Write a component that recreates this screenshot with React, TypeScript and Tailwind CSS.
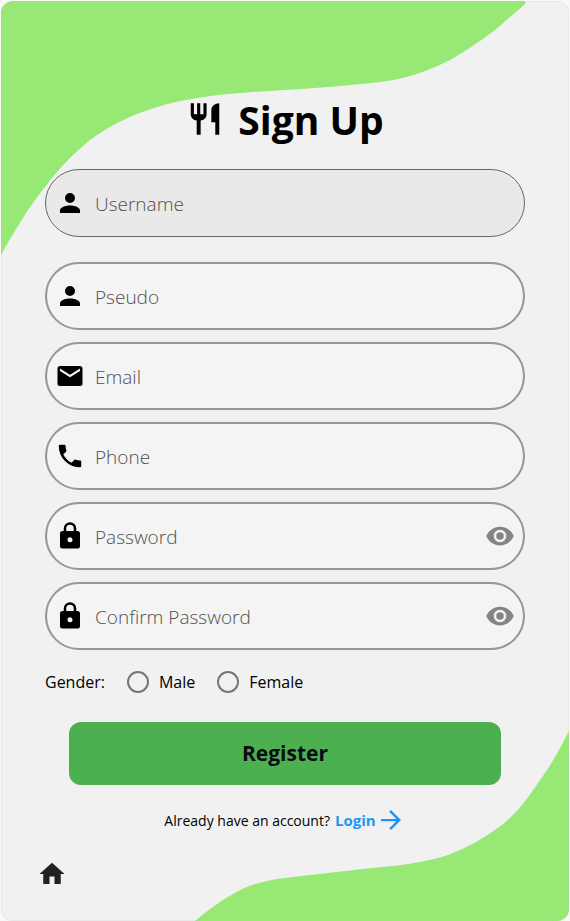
import React from "react";

const paths = {
  silverware:
    "M11,9H9V2H7V9H5V2H3V9C3,11.12 4.66,12.84 6.75,12.97V22H9.25V12.97C11.34,12.84 13,11.12 13,9V2H11V9M16,6V14H18.5V22H21V2C18.24,2 16,4.24 16,6Z",
  person:
    "M12,4A4,4 0 0,1 16,8A4,4 0 0,1 12,12A4,4 0 0,1 8,8A4,4 0 0,1 12,4M12,14C16.42,14 20,15.79 20,18V20H4V18C4,15.79 7.58,14 12,14Z",
  email:
    "M20,8L12,13L4,8V6L12,11L20,6M20,4H4C2.89,4 2,4.89 2,6V18A2,2 0 0,0 4,20H20A2,2 0 0,0 22,18V6C22,4.89 21.1,4 20,4Z",
  phone:
    "M6.62,10.79C8.06,13.62 10.38,15.94 13.21,17.38L15.41,15.18C15.69,14.9 16.08,14.82 16.43,14.93C17.55,15.3 18.75,15.5 20,15.5A1,1 0 0,1 21,16.5V20A1,1 0 0,1 20,21A17,17 0 0,1 3,4A1,1 0 0,1 4,3H7.5A1,1 0 0,1 8.5,4C8.5,5.25 8.7,6.45 9.07,7.57C9.18,7.92 9.1,8.31 8.82,8.59L6.62,10.79Z",
  lock:
    "M12,17A2,2 0 0,0 14,15C14,13.89 13.1,13 12,13A2,2 0 0,0 10,15A2,2 0 0,0 12,17M18,8A2,2 0 0,1 20,10V20A2,2 0 0,1 18,22H6A2,2 0 0,1 4,20V10C4,8.89 4.9,8 6,8H7V6A5,5 0 0,1 12,1A5,5 0 0,1 17,6V8H18M12,3A3,3 0 0,0 9,6V8H15V6A3,3 0 0,0 12,3Z",
  eye:
    "M12,9A3,3 0 0,0 9,12A3,3 0 0,0 12,15A3,3 0 0,0 15,12A3,3 0 0,0 12,9M12,17A5,5 0 0,1 7,12A5,5 0 0,1 12,7A5,5 0 0,1 17,12A5,5 0 0,1 12,17M12,4.5C7,4.5 2.73,7.61 1,12C2.73,16.39 7,19.5 12,19.5C17,19.5 21.27,16.39 23,12C21.27,7.61 17,4.5 12,4.5Z",
  arrow: "M12,4L10.59,5.41L16.17,11.1H4V12.9H16.17L10.59,18.59L12,20L20,12Z",
  home: "M10,20V14H14V20H19V12H22L12,3L2,12H5V20H10Z",
};

function Icon({ name, className = "size-[30px]" }: { name: keyof typeof paths; className?: string }) {
  return (
    <svg viewBox="0 0 24 24" fill="currentColor" aria-hidden="true" className={`shrink-0 ${className}`}>
      <path d={paths[name]} />
    </svg>
  );
}

type FieldProps = {
  icon: keyof typeof paths;
  label: string;
  type?: string;
  className?: string;
};

function Field({ icon, label, type = "text", className = "border-2 border-[#969696] bg-[#f4f4f4] px-2" }: FieldProps) {
  return (
    <div className={`flex h-[68px] items-center gap-2.5 rounded-full text-black ${className}`}>
      <Icon name={icon} />
      <input
        type={type}
        aria-label={label}
        placeholder={label}
        className="h-full min-w-0 flex-1 bg-transparent pt-0.5 text-[19px] font-light text-black outline-none placeholder:text-[#505050]"
      />
      {type === "password" && (
        <button type="button" aria-label="Show password" className="text-[#858585]">
          <Icon name="eye" />
        </button>
      )}
    </div>
  );
}

function Choice({ label }: { label: string }) {
  return (
    <label className="flex items-center gap-2.5">
      <input
        type="radio"
        name="gender"
        value={label}
        className="size-[22px] appearance-none rounded-full border-2 border-[#767676] checked:border-[6px]"
      />
      {label}
    </label>
  );
}

export default function App() {
  return (
    <div className="flex min-h-screen bg-[#f8f8f8] px-px pt-px font-['Open_Sans','Noto_Sans',sans-serif] text-black">
      <main className="relative isolate flex flex-1 flex-col overflow-hidden rounded-xl bg-[#f1f1f1] px-11 pt-[94px] pb-8 shadow-[inset_0_0_0_1px_#e8e8e8]">
        <svg viewBox="0 0 568 255" aria-hidden="true" className="absolute top-0 left-0 -z-10 w-full" fill="#97e874">
          <path d="M0 254C18 222 31 202 44 186C58 167 73 152 89 139C114 120 146 107 179 100C214 93 249 91 284 89C319 87 355 84 387 80C411 76 434 67 451 58C469 47 489 34 501 23L523 4Q526 1 523 0H0Z" />
        </svg>
        <svg viewBox="0 0 568 190" aria-hidden="true" className="absolute bottom-0 left-0 -z-10 w-full" fill="#97e874">
          <path d="M194 190C206 180 219 170 232 163C249 153 266 149 284 147C317 143 350 139 381 136C405 134 428 130 447 124C468 116 486 105 501 94C516 82 528 66 537 52C549 36 560 16 568 0V190Z" />
        </svg>

        <h1 className="flex h-[50px] items-center justify-center gap-3.5 text-[39px] font-bold">
          <Icon name="silverware" className="mb-0.5 size-[38px]" />
          Sign Up
        </h1>

        <form className="mt-6 flex flex-col" onSubmit={(e) => e.preventDefault()}>
          <Field icon="person" label="Username" className="border border-[#666666] bg-[#e9e9e9] px-[9px]" />
          <div className="mt-[25px] flex flex-col gap-3">
            <Field icon="person" label="Pseudo" />
            <Field icon="email" label="Email" type="email" />
            <Field icon="phone" label="Phone" type="tel" />
            <Field icon="lock" label="Password" type="password" />
            <Field icon="lock" label="Confirm Password" type="password" />
          </div>
          <fieldset className="mt-5 flex h-6 items-center gap-[22px] text-[16px]">
            <span>Gender:</span>
            <Choice label="Male" />
            <Choice label="Female" />
          </fieldset>
          <button
            type="submit"
            className="mx-6 mt-7 h-[63px] rounded-xl bg-[#4caf50] text-[21px] font-bold text-[#0a0a14]"
          >
            Register
          </button>
        </form>

        <p className="mt-5 flex h-[30px] items-center justify-center gap-[5px] text-[14px]">
          Already have an account?
          <a href="#login" className="flex items-center text-[15px] font-bold text-[#2196f3]">
            Login
            <Icon name="arrow" />
          </a>
        </p>

        <a href="#home" aria-label="Home" className="mt-6 -ml-2 self-start text-[#222222]">
          <Icon name="home" />
        </a>
      </main>
    </div>
  );
}
